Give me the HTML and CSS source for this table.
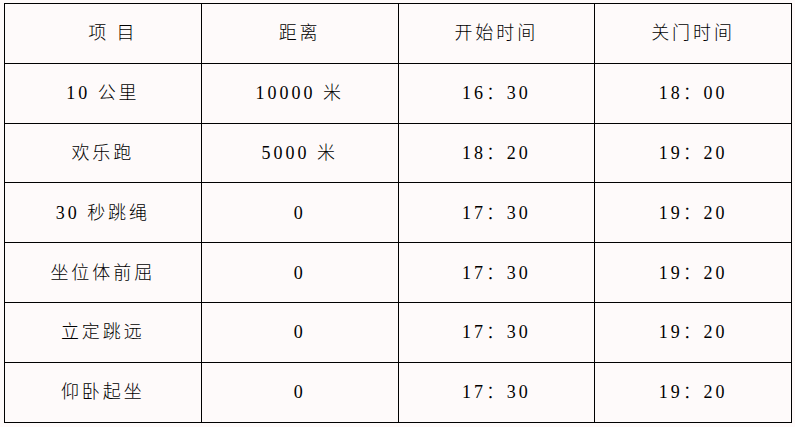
FILE: index.html
```html
<!DOCTYPE html>
<html lang="zh">
<head>
<meta charset="utf-8">
<link rel="stylesheet" href="styles.css">
</head>
<body>
<table class="schedule">
  <colgroup><col class="c"><col class="c"><col class="c"><col class="c"></colgroup>
  <tr><td class="first-head">项 目</td><td>距离</td><td>开始时间</td><td>关门时间</td></tr>
  <tr><td>10 公里</td><td>10000 米</td><td>16：30</td><td>18：00</td></tr>
  <tr><td>欢乐跑</td><td>5000 米</td><td>18：20</td><td>19：20</td></tr>
  <tr><td>30 秒跳绳</td><td>0</td><td>17：30</td><td>19：20</td></tr>
  <tr><td>坐位体前屈</td><td>0</td><td>17：30</td><td>19：20</td></tr>
  <tr><td>立定跳远</td><td>0</td><td>17：30</td><td>19：20</td></tr>
  <tr><td>仰卧起坐</td><td>0</td><td>17：30</td><td>19：20</td></tr>
</table>
</body>
</html>
```
FILE: styles.css
```css
html, body {
  margin: 0;
  background: #fefafa;
}
body {
  padding: 3px 0 0 4px;
  font-family: "Liberation Serif", "Noto Sans CJK SC", serif;
  color: #000;
}
.schedule {
  border-collapse: collapse;
  width: 788px;
  table-layout: fixed;
}
.schedule td {
  border: 1px solid #000;
  height: 58.8px;
  padding: 0;
  text-align: center;
  vertical-align: middle;
  font-size: 18px;
  font-weight: 300;
  letter-spacing: 3px;
  line-height: 20px;
}
.schedule .first-head {
  padding-left: 20px;
}
```
